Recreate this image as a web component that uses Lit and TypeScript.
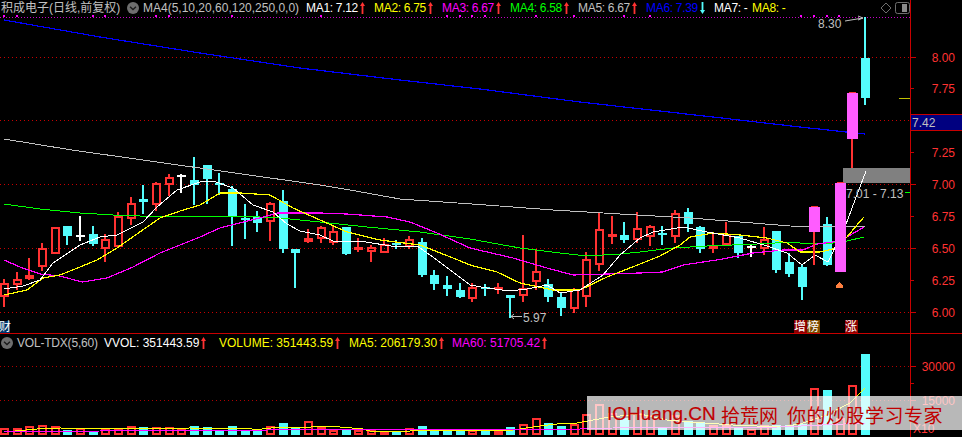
import { LitElement, html, svg, css } from 'lit';
import { customElement } from 'lit/decorators.js';

type Kind = 'r' | 'c' | 'w' | 'p';
// kind, high, body top, body bottom, low (all in page pixels)
type Candle = [Kind, number, number, number, number];

const CANDLES: Candle[] = [
  ['r', 279, 283, 297, 307], ['r', 272, 279, 285, 290], ['r', 258, 275, 279, 280], ['r', 243, 248, 267, 271],
  ['r', 227, 227, 254, 254], ['c', 226, 226, 236, 245], ['w', 216, 235, 237, 241], ['c', 226, 234, 244, 246],
  ['r', 234, 239, 249, 262], ['r', 212, 216, 247, 248], ['r', 197, 203, 219, 225], ['c', 185, 199, 202, 214],
  ['r', 182, 183, 205, 211], ['r', 174, 177, 185, 196], ['w', 174, 175, 176, 193], ['c', 157, 180, 185, 205],
  ['c', 165, 165, 179, 204], ['c', 173, 183, 185, 195], ['c', 186, 189, 217, 246], ['c', 204, 218, 220, 239],
  ['c', 211, 217, 223, 232], ['r', 202, 203, 222, 241], ['c', 190, 201, 249, 253], ['c', 249, 249, 253, 288],
  ['r', 229, 238, 242, 243], ['r', 226, 227, 239, 243], ['r', 225, 231, 243, 245], ['c', 227, 227, 254, 255],
  ['r', 238, 247, 249, 252], ['r', 245, 247, 252, 262], ['r', 238, 244, 253, 253], ['c', 240, 243, 245, 249],
  ['r', 236, 239, 247, 249], ['c', 238, 242, 275, 277], ['c', 270, 275, 284, 290], ['c', 276, 285, 289, 296],
  ['c', 283, 290, 297, 298], ['r', 283, 287, 299, 302], ['c', 284, 287, 288, 296], ['r', 283, 287, 290, 294],
  ['c', 295, 295, 298, 318], ['r', 235, 288, 296, 302], ['r', 249, 271, 282, 290], ['c', 279, 284, 297, 302],
  ['c', 293, 297, 308, 316], ['r', 288, 289, 309, 313], ['r', 252, 259, 297, 307], ['r', 212, 229, 265, 271],
  ['r', 216, 234, 236, 244], ['c', 222, 235, 240, 243], ['r', 212, 228, 240, 243], ['r', 225, 226, 237, 246],
  ['c', 226, 233, 235, 245], ['r', 210, 213, 237, 243], ['c', 208, 212, 224, 232], ['c', 226, 227, 249, 253],
  ['r', 233, 245, 249, 253], ['r', 222, 234, 245, 245], ['c', 236, 236, 253, 258], ['w', 245, 246, 248, 257],
  ['r', 227, 239, 249, 255], ['c', 231, 231, 270, 273], ['c', 253, 262, 274, 277], ['c', 264, 267, 287, 300],
  ['p', 206, 207, 232, 265], ['c', 217, 224, 265, 266], ['p', 182, 183, 272, 272], ['p', 92, 93, 139, 168],
  ['c', 17, 58, 98, 105],
];

// volume bars: top y and whether the bar is filled cyan
const VOLUME: [Kind, number][] = ([
  ['r', 280], ['r', 280], ['r', 274], ['r', 270], ['r', 274], ['c', 286], ['r', 280], ['c', 288], ['r', 280], ['r', 280],
  ['r', 274], ['c', 276], ['r', 277], ['r', 277], ['r', 280], ['c', 273], ['c', 276], ['c', 288], ['c', 273], ['c', 288],
  ['c', 288], ['r', 274], ['c', 264], ['c', 276], ['r', 259], ['r', 276], ['r', 284], ['c', 284], ['r', 284], ['r', 286],
  ['r', 287], ['c', 289], ['r', 280], ['c', 273], ['c', 285], ['c', 285], ['c', 285], ['r', 285], ['c', 285], ['r', 288],
  ['c', 276], ['r', 268], ['r', 250], ['c', 264], ['c', 272], ['r', 268], ['r', 238], ['r', 208], ['r', 233], ['c', 250],
  ['r', 235], ['r', 240], ['c', 278], ['r', 240], ['c', 258], ['c', 262], ['r', 270], ['r', 270], ['c', 275], ['r', 282],
  ['r', 270], ['c', 270], ['c', 270], ['c', 268], ['r', 160], ['c', 165], ['r', 250], ['r', 151], ['c', 57],
] as [Kind, number][]).map(([k, z]) => [k, Math.round(335 + z / 3)] as [Kind, number]);

const MA_LINES: [string, number, string][] = [
  ['#c0c0c0', 1, '4,139 72,150 320,185 350,190 400,199 486,205 553,210 637,215 690,218 740,222 790,226 847,227 865,226'],
  ['#0000ff', 1.2, '4,20 100,37 200,53 300,68 400,80 480,89 580,102 713,117 800,127 865,134'],
  ['#00ff00', 1, '4,204 40,209 80,213 113,215 140,216 173,216 240,216 280,218 320,222 367,227 420,232 470,239 520,248 560,253 587,256 620,254 640,252 673,248 707,246 757,244 793,242 800,243 833,243 847,241 864,237'],
  ['#ff00ff', 1.2, '4,260 20,267 40,274 60,276 82,282 107,278 133,267 160,253 200,237 220,228 260,218 277,213 320,213 347,214 387,217 410,222 437,233 470,248 513,258 547,268 573,275 607,274 640,273 663,272 683,265 723,259 753,253 783,250 803,250 817,244 833,242 847,237 864,227'],
  ['#ffff00', 1.2, '4,295 27,290 43,278 60,275 80,267 97,260 117,248 147,227 160,218 180,211 200,205 220,193 240,193 270,195 293,208 320,220 347,232 380,240 420,245 453,258 470,265 497,272 520,283 553,290 580,290 607,277 640,264 660,256 680,245 690,237 713,233 740,235 767,238 787,243 800,252 820,252 833,249 847,237 857,225 864,217'],
  ['#ffffff', 1, '4,289 23,286 40,280 53,263 80,245 100,237 117,235 143,222 157,207 177,190 200,182 213,181 233,188 253,205 273,212 287,224 300,231 320,235 333,241 360,241 397,247 417,246 433,257 453,272 470,285 487,288 510,291 527,289 547,285 560,293 580,290 603,275 620,255 640,238 653,232 683,227 707,232 740,238 767,246 787,253 802,265 815,255 828,262 845,227 855,200 866,171'],
];

const VOL_MA5 = '4,432 37,429 60,428 100,429 190,428 252,429 253,430 280,427 303,428 320,426 340,427 363,429 370,431 400,432 420,430 480,430 513,430 540,426 557,424 577,423 593,420 610,417 640,414 667,420 690,422 733,425 780,427 800,424 827,415 850,403 865,388';
const VOL_MA60 = '4,432 100,431 267,430 480,429 580,429 613,428 780,427 865,423';

const MARKERS = [4, 17, 93, 105, 156, 169, 232, 321, 447, 460, 472, 485, 536, 574, 624, 650, 801, 814, 827, 839];

const PRICE_TICKS: [number, string, boolean][] = [
  [57, '8.00', true], [88, '7.75', false], [152, '7.25', false], [184, '7.00', true],
  [216, '6.75', false], [248, '6.50', true], [280, '6.25', false], [312, '6.00', true],
];

const xOf = (i: number) => Math.round(4 + 12.66 * i);

const COLORS: Record<Kind, string> = { r: '#ff3232', c: '#54fcfc', w: '#ffffff', p: '#ff5cff' };

function candle(c: Candle, i: number) {
  const [kind, high, top, bottom, low] = c;
  const x = xOf(i);
  if (kind === 'r') {
    return svg`
      <rect x=${x - 1} y=${high} width="2" height=${top - high} fill="#ff3232" />
      <rect x=${x - 1} y=${bottom} width="2" height=${low - bottom} fill="#ff3232" />
      <rect x=${x - 3} y=${top + 1} width="7" height=${Math.max(bottom - top - 2, 1)} fill="none" stroke="#ff3232" stroke-width="2" />
    `;
  }
  const color = COLORS[kind];
  if (kind === 'p') {
    return svg`
      <rect x=${x - 1} y=${bottom} width="2" height=${low - bottom} fill="#ff3232" />
      <rect x=${x - 3} y=${high} width="7" height="1" fill="#ff3232" />
      <rect x=${x - 5} y=${top} width="11" height=${bottom - top} fill=${color} />
    `;
  }
  return svg`
    <rect x=${x - 1} y=${high} width="2" height=${low - high} fill=${color} />
    <rect x=${x - 4} y=${top} width="9" height=${Math.max(bottom - top, 2)} fill=${color} />
  `;
}

function volumeBar(v: [Kind, number], i: number) {
  const [kind, top] = v;
  const x = xOf(i);
  if (kind === 'c') {
    return svg`<rect x=${x - 4} y=${top} width="9" height=${435 - top} fill="#54fcfc" />`;
  }
  return svg`<rect x=${x - 3} y=${top + 1} width="7" height=${433 - top} fill="none" stroke="#ff3232" stroke-width="2" />`;
}

const upArrow = (color = '#ff3232') => html`
  <svg class="arrow" viewBox="0 0 5 12" width="5" height="12">
    <path d="M2.5 0 L5 4 H3.4 V12 H1.6 V4 H0 Z" fill=${color} />
  </svg>
`;

const downArrow = (color = '#54fcfc') => html`
  <svg class="arrow" viewBox="0 0 5 12" width="5" height="12">
    <path d="M2.5 12 L5 8 H3.4 V0 H1.6 V8 H0 Z" fill=${color} />
  </svg>
`;

const chevronBall = html`
  <svg class="ball" viewBox="0 0 12 12" width="12" height="12">
    <circle cx="6" cy="6" r="6" fill="#6e6e6e" />
    <path d="M3 4.8 L6 7.6 L9 4.8" fill="none" stroke="#1a1a1a" stroke-width="1.3" />
  </svg>
`;

@customElement('app-root')
export class AppRoot extends LitElement {
  static override styles = css`
    :host {
      display: block;
      width: 962px;
      height: 437px;
      background: #000;
      font-family: 'Liberation Sans', 'Noto Sans CJK SC', sans-serif;
      font-size: 12px;
    }

    .app {
      position: relative;
      width: 962px;
      height: 437px;
      overflow: hidden;
      background: #000;
    }

    .pane {
      display: flex;
    }

    .pane.price {
      height: 333px;
      border-bottom: 1px solid #c80000;
    }

    .pane.volume {
      height: 103px;
    }

    .plot {
      width: 910px;
      flex: none;
      display: flex;
      flex-direction: column;
    }

    .plot svg.chart,
    .axis svg {
      display: block;
    }

    .axis {
      width: 51px;
      flex: none;
      border-left: 1px solid #c80000;
    }

    .legend {
      display: flex;
      align-items: center;
      height: 15px;
      flex: none;
      white-space: nowrap;
      line-height: 14px;
      color: #c0c0c0;
    }

    .pane.volume .legend {
      height: 17px;
      padding-left: 1px;
    }

    .title {
      width: 127px;
      padding-left: 1px;
      box-sizing: border-box;
      flex: none;
      font-size: 12px;
    }

    .ball {
      flex: none;
      margin-right: 4px;
    }

    .params {
      width: 163px;
      flex: none;
    }

    .ma {
      width: 68px;
      flex: none;
      display: flex;
      align-items: center;
      letter-spacing: -0.3px;
    }

    .ma.short {
      width: 38px;
    }

    .arrow {
      flex: none;
      margin-left: 2px;
    }

    .tools {
      margin-left: auto;
      display: flex;
      align-items: center;
      gap: 3px;
      padding-right: 0;
    }

    .vol-name {
      width: 87px;
      flex: none;
      letter-spacing: -0.2px;
    }

    .vol-item {
      flex: none;
      display: flex;
      align-items: center;
    }

    .vvol {
      width: 115px;
      color: #fff;
    }

    .volume-val {
      width: 130px;
      color: #ffff00;
    }

    .ma5 {
      width: 103px;
      color: #ffff00;
    }

    .ma60 {
      color: #ff00ff;
    }

    .white {
      color: #fff;
    }

    .yellow {
      color: #ffff00;
    }

    .magenta {
      color: #ff00ff;
    }

    .green {
      color: #00ff00;
    }

    .silver {
      color: #c0c0c0;
    }

    .blue {
      color: #0000ff;
    }

    svg text {
      font-family: 'Liberation Sans', sans-serif;
      font-size: 12px;
    }

    .tag {
      fill: #fff;
      font-family: 'Noto Sans CJK SC', sans-serif;
    }

    .watermark {
      position: absolute;
      right: 0;
      bottom: 7px;
      width: 375px;
      height: 34px;
      box-sizing: border-box;
      padding: 2px 0 0 20px;
      display: flex;
      align-items: center;
      background: rgba(255, 255, 255, 0.72);
      color: #c00000;
      font-size: 19px;
      font-family: 'Liberation Sans', 'Noto Sans CJK SC', sans-serif;
      white-space: nowrap;
    }

    .watermark b {
      font-weight: 400;
      width: 114px;
      flex: none;
      -webkit-text-stroke: 0.2px #c00000;
    }

    .watermark .site {
      width: 66px;
      flex: none;
    }

    .watermark .slogan {
      letter-spacing: 0.5px;
    }
  `;

  private renderLegend() {
    return html`
      <div class="legend">
        <span class="title">积成电子(日线,前复权)</span>
        ${chevronBall}
        <span class="params">MA4(5,10,20,60,120,250,0,0)</span>
        <span class="ma white">MA1: 7.12${upArrow()}</span>
        <span class="ma yellow">MA2: 6.75${upArrow()}</span>
        <span class="ma magenta">MA3: 6.67${upArrow()}</span>
        <span class="ma green">MA4: 6.58${upArrow()}</span>
        <span class="ma silver">MA5: 6.67${upArrow()}</span>
        <span class="ma blue">MA6: 7.39${downArrow()}</span>
        <span class="ma short white">MA7: -</span>
        <span class="ma short yellow">MA8: -</span>
        <span class="tools">
          <svg viewBox="0 0 12 12" width="12" height="12">
            <path d="M6 1 L11 6 L6 11 L1 6 Z" fill="none" stroke="#6e6e6e" />
          </svg>
          <svg viewBox="0 0 15 12" width="15" height="12">
            <rect x="0.5" y="0.5" width="14" height="11" rx="2" fill="none" stroke="#6e6e6e" />
            <rect x="7" y="2" width="5" height="8" fill="#8a8a8a" />
          </svg>
        </span>
      </div>
    `;
  }

  private renderPriceChart() {
    const gridLines = [57, 120, 184, 248, 312];
    const behind = CANDLES.map((c, i) => (c[0] === 'p' ? null : candle(c, i)));
    const front = CANDLES.map((c, i) => (c[0] === 'p' ? candle(c, i) : null));
    return html`
      <svg class="chart" viewBox="0 15 910 318" width="910" height="318">
        <g shape-rendering="crispEdges">
          <line x1="0" x2="910" y1="17.5" y2="17.5" stroke="#c800c8" stroke-dasharray="1 2" />
          ${MARKERS.map((x) => svg`<rect x=${x - 1} y="15" width="2" height="2" fill="#ff00ff" />`)}
          ${gridLines.map(
            (y) => svg`<line x1="0" x2="910" y1=${y + 0.5} y2=${y + 0.5} stroke="#c80000" stroke-dasharray="1 3" />`
          )}
          <rect x="843" y="168" width="67" height="15" fill="#808080" />
          <rect x="899" y="98" width="11" height="1" fill="#c0c000" />
          <rect x="905" y="192" width="5" height="1" fill="#00ff00" />
          ${behind}
          ${MA_LINES.map(
            ([color, width, points]) => svg`<polyline points=${points} fill="none" stroke=${color} stroke-width=${width} />`
          )}
          ${front}
          <path d="M836 288 V285.5 L839.5 282 L843 285.5 V288 Z" fill="#ff8040" />
        </g>
        <text x="846" y="198" fill="#c0c0c0">7.01 - 7.13</text>
        <text x="818" y="28" fill="#c0c0c0">8.30</text>
        <path d="M845 21 L863 18 M858 16 L863 18 L858 20" fill="none" stroke="#c0c0c0" />
        <text x="523" y="322" fill="#c0c0c0">5.97</text>
        <path d="M522 316.5 H511 M514 314 L511 316.5 L514 319" fill="none" stroke="#c0c0c0" />
        <g>
          <rect x="0" y="321" width="10" height="12" fill="#003468" />
          <text class="tag" x="-1" y="331" font-size="11">财</text>
          <rect x="794" y="320" width="13" height="13" fill="#8c0000" />
          <text class="tag" x="794" y="331">增</text>
          <rect x="807" y="320" width="13" height="13" fill="#7a4a00" />
          <text class="tag" x="807" y="331">榜</text>
          <rect x="845" y="320" width="13" height="13" fill="#8c0000" />
          <text class="tag" x="845" y="331">涨</text>
        </g>
      </svg>
    `;
  }

  private renderPriceAxis() {
    return html`
      <svg viewBox="911 0 51 333" width="51" height="333">
        <g shape-rendering="crispEdges">
          ${PRICE_TICKS.map(
            ([y, , long]) => svg`<rect x="911" y=${y} width=${long ? 5 : 3} height="1" fill="#c80000" />`
          )}
          <rect x="911" y="114" width="51" height="17" fill="#000080" />
          <rect x="911" y="114" width="51" height="1" fill="#c80000" />
          <rect x="911" y="130" width="51" height="1" fill="#c80000" />
        </g>
        <text x="912" y="127" fill="#c0c0c0">7.42</text>
        ${PRICE_TICKS.map(
          ([y, label]) => svg`<text x="955" y=${y + 5} text-anchor="end" fill="#ff3232">${label}</text>`
        )}
      </svg>
    `;
  }

  private renderVolumeLegend() {
    return html`
      <div class="legend">
        ${chevronBall}
        <span class="vol-name">VOL-TDX(5,60)</span>
        <span class="vol-item vvol">VVOL: 351443.59${upArrow()}</span>
        <span class="vol-item volume-val">VOLUME: 351443.59${upArrow()}</span>
        <span class="vol-item ma5">MA5: 206179.30${upArrow()}</span>
        <span class="vol-item ma60">MA60: 51705.42${upArrow()}</span>
      </div>
    `;
  }

  private renderVolumeChart() {
    return html`
      <svg class="chart" viewBox="0 351 910 86" width="910" height="86">
        <g shape-rendering="crispEdges">
          ${[366, 400].map(
            (y) => svg`<line x1="0" x2="910" y1=${y + 0.5} y2=${y + 0.5} stroke="#b00000" stroke-dasharray="1 3" />`
          )}
          ${VOLUME.map(volumeBar)}
          <polyline points=${VOL_MA5} fill="none" stroke="#ffff00" />
          <polyline points=${VOL_MA60} fill="none" stroke="#ff00ff" />
        </g>
      </svg>
    `;
  }

  private renderVolumeAxis() {
    return html`
      <svg viewBox="911 334 51 103" width="51" height="103">
        <g shape-rendering="crispEdges">
          <rect x="911" y="366" width="5" height="1" fill="#c80000" />
          <rect x="911" y="383" width="3" height="1" fill="#c80000" />
          <rect x="911" y="400" width="5" height="1" fill="#c80000" />
        </g>
        <text x="955" y="371" text-anchor="end" fill="#ff3232">30000</text>
        <text x="955" y="405" text-anchor="end" fill="#ff3232">15000</text>
        <text x="913" y="433" fill="#ff3232">X10</text>
      </svg>
    `;
  }

  override render() {
    return html`
      <div class="app">
        <div class="pane price">
          <div class="plot">${this.renderLegend()}${this.renderPriceChart()}</div>
          <div class="axis">${this.renderPriceAxis()}</div>
        </div>
        <div class="pane volume">
          <div class="plot">${this.renderVolumeLegend()}${this.renderVolumeChart()}</div>
          <div class="axis">${this.renderVolumeAxis()}</div>
        </div>
        <div class="watermark">
          <b>IOHuang.CN</b><span class="site">拾荒网</span><span class="slogan">你的炒股学习专家</span>
        </div>
      </div>
    `;
  }
}
